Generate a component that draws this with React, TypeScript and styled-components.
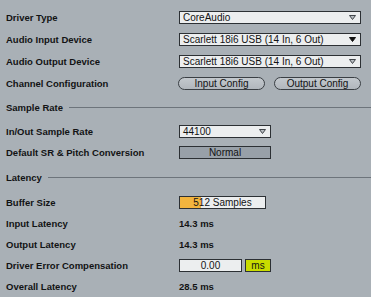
import React from 'react';
import styled, { createGlobalStyle } from 'styled-components';

// Page reset and panel background
const GlobalStyle = createGlobalStyle`
  html, body {
    margin: 0;
    padding: 0;
    background: #a9b0b6;
  }
`;

const Panel = styled.div`
  width: 371px;
  height: 297px;
  box-sizing: border-box;
  padding: 6px 10px 0 6px;
  font-family: "Liberation Sans", Arial, sans-serif;
  color: #121314;
  background: #a9b0b6;
  overflow: hidden;
`;

const Row = styled.div<{ $h?: number }>`
  display: flex;
  align-items: center;
  height: ${(p) => p.$h ?? 22}px;
`;

const Label = styled.div`
  flex: none;
  width: 173px;
  font-size: 9.5px;
  font-weight: bold;
  white-space: nowrap;
`;

// Section title with a rule running to the right edge
const SectionHeader = styled.div<{ $h: number }>`
  display: flex;
  align-items: center;
  gap: 6px;
  height: ${(p) => p.$h}px;
  margin-right: -10px;
  font-size: 9.5px;
  font-weight: bold;

  &::after {
    content: '';
    flex: 1;
    height: 1px;
    background: #6d747b;
  }
`;

const Select = styled.div<{ $w: number }>`
  display: flex;
  align-items: center;
  justify-content: space-between;
  box-sizing: border-box;
  width: ${(p) => p.$w}px;
  height: 13px;
  padding: 0 4px 0 3px;
  background: #eceeef;
  border: 1px solid #2c3034;
  font-size: 10px;
  line-height: 11px;
  white-space: nowrap;
`;

const Pill = styled.div`
  display: flex;
  align-items: center;
  justify-content: center;
  box-sizing: border-box;
  width: 87px;
  height: 13px;
  border: 1px solid #3a3f44;
  border-radius: 7px;
  background: linear-gradient(#c3c8cd, #b1b7bd);
  font-size: 10px;
`;

const Buttons = styled.div`
  display: flex;
  gap: 9px;
  margin-left: -1px;
`;

const Box = styled.div<{ $w: number; $bg?: string }>`
  position: relative;
  display: flex;
  align-items: center;
  justify-content: center;
  box-sizing: border-box;
  width: ${(p) => p.$w}px;
  height: 13px;
  border: 1px solid #2c3034;
  background: ${(p) => p.$bg ?? '#eceeef'};
  font-size: 10px;
  overflow: hidden;
`;

const Fill = styled.div`
  position: absolute;
  left: 0;
  top: 0;
  bottom: 0;
  background: #f2b43e;
`;

const BoxText = styled.span`
  position: relative;
`;

const Value = styled.div`
  font-size: 9.5px;
  font-weight: bold;
`;

const Pair = styled.div`
  display: flex;
  gap: 3px;
`;

const Arrow = ({ solid }: { solid?: boolean }) => (
  <svg width="7" height="5" viewBox="0 0 7 5">
    <polygon
      points="0.5,0.5 6.5,0.5 3.5,4.5"
      fill={solid ? '#111' : '#b7bcc1'}
      stroke={solid ? '#111' : '#40454a'}
      strokeWidth="1"
    />
  </svg>
);

const App = () => {
  const bufferPct = 25;

  return (
    <Panel>
      <GlobalStyle />

      <Row>
        <Label>Driver Type</Label>
        <Select $w={183}>
          CoreAudio
          <Arrow />
        </Select>
      </Row>
      <Row>
        <Label>Audio Input Device</Label>
        <Select $w={183}>
          Scarlett 18i6 USB (14 In, 6 Out)
          <Arrow solid />
        </Select>
      </Row>
      <Row>
        <Label>Audio Output Device</Label>
        <Select $w={183}>
          Scarlett 18i6 USB (14 In, 6 Out)
          <Arrow />
        </Select>
      </Row>
      <Row>
        <Label>Channel Configuration</Label>
        <Buttons>
          <Pill>Input Config</Pill>
          <Pill>Output Config</Pill>
        </Buttons>
      </Row>

      <SectionHeader $h={27}>Sample Rate</SectionHeader>
      <Row $h={21}>
        <Label>In/Out Sample Rate</Label>
        <Select $w={92}>
          44100
          <Arrow />
        </Select>
      </Row>
      <Row $h={21}>
        <Label>Default SR &amp; Pitch Conversion</Label>
        <Box $w={92} $bg="#98a0a8">Normal</Box>
      </Row>

      <SectionHeader $h={29}>Latency</SectionHeader>
      <Row $h={21}>
        <Label>Buffer Size</Label>
        <Box $w={87}>
          <Fill style={{ width: `${bufferPct}%` }} />
          <BoxText>512 Samples</BoxText>
        </Box>
      </Row>
      <Row $h={21}>
        <Label>Input Latency</Label>
        <Value>14.3 ms</Value>
      </Row>
      <Row $h={21}>
        <Label>Output Latency</Label>
        <Value>14.3 ms</Value>
      </Row>
      <Row $h={21}>
        <Label>Driver Error Compensation</Label>
        <Pair>
          <Box $w={63}>0.00</Box>
          <Box $w={26} $bg="#c9dc00">ms</Box>
        </Pair>
      </Row>
      <Row $h={21}>
        <Label>Overall Latency</Label>
        <Value>28.5 ms</Value>
      </Row>
    </Panel>
  );
};

export default App;
